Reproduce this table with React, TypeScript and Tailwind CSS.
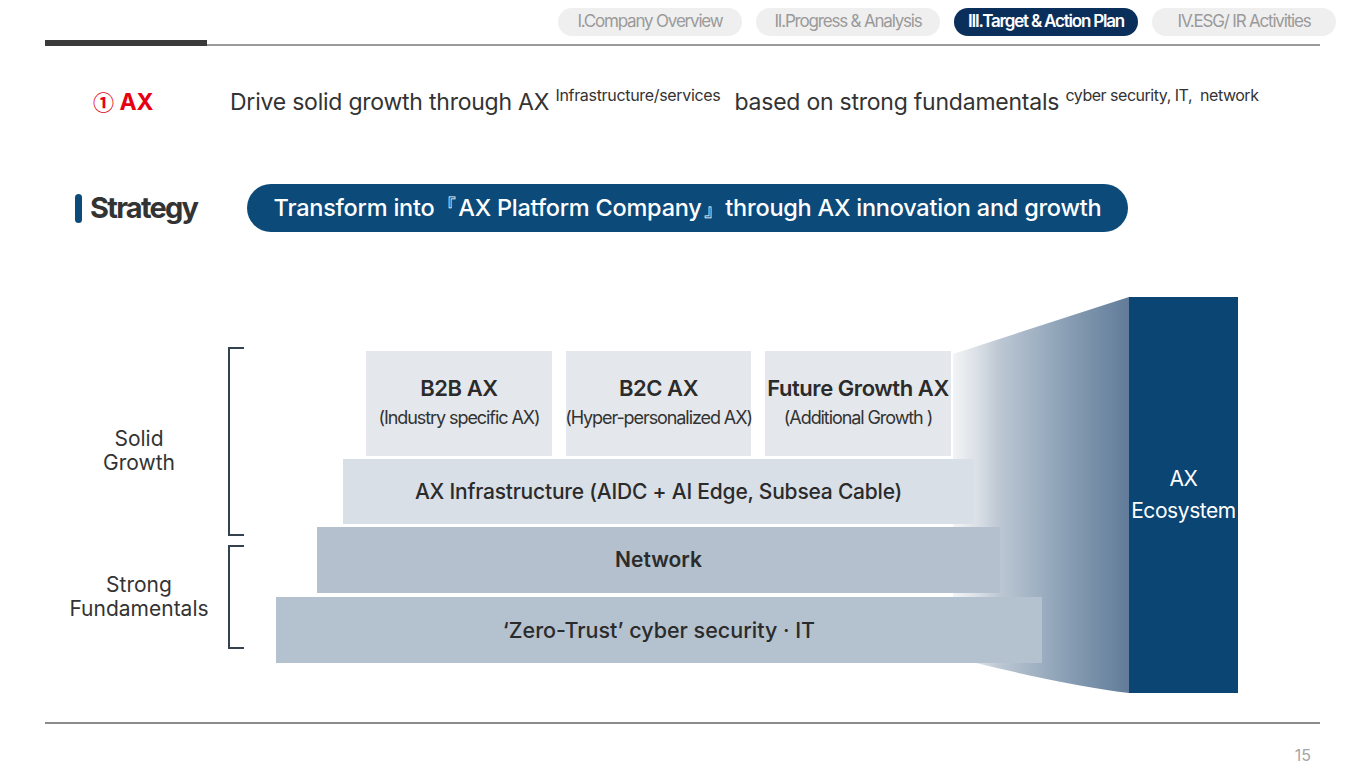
export default function App() {
  const tabs = [
    { label: 'I.Company Overview', active: false },
    { label: 'II.Progress & Analysis', active: false },
    { label: 'III.Target & Action Plan', active: true },
    { label: 'IV.ESG/ IR Activities', active: false },
  ];

  return (
    <div className="w-[1365px] h-[768px] bg-white overflow-hidden font-['Inter',sans-serif] text-[#2b2b2b]">
      {/* top tabs */}
      <div className="flex justify-end gap-[14px] pt-[8px] pr-[29px]">
        {tabs.map(t => (
          <div key={t.label}
            className={`w-[184px] h-[28px] rounded-full flex items-center justify-center text-[17px] tracking-[-0.07em] whitespace-nowrap ${t.active ? 'bg-[#0b2f5b] text-white font-semibold' : 'bg-[#efefef] text-[#9a9a9a]'}`}>
            {t.label}
          </div>
        ))}
      </div>
      <div className="flex items-end mx-[45px] mt-[4px] h-[6px]">
        <div className="w-[162px] h-[6px] bg-[#3a3a3a]" />
        <div className="flex-1 h-[2px] bg-[#9a9a9a]" />
      </div>

      {/* headline */}
      <div className="flex items-baseline mt-[34px] h-[30px] pl-[93px] leading-[30px]">
        <span className="w-[137px] text-[23px] font-bold text-[#e60012] whitespace-nowrap">
          <span className="font-['Noto_Sans_CJK_KR',sans-serif] text-[21px] font-semibold">①</span> AX
        </span>
        <span className="text-[23px] text-[#333] tracking-[-0.01em] whitespace-nowrap">
          Drive solid growth through AX{' '}
          <span className="text-[16px] align-[9px] tracking-[-0.02em]">Infrastructure/services</span>
          <span className="ml-[14px]">based on strong fundamentals</span>{' '}
          <span className="text-[16px] align-[9px] tracking-[-0.03em]">cyber security, IT,&nbsp; network</span>
        </span>
      </div>

      {/* strategy */}
      <div className="flex items-center mt-[74px] pl-[75px] h-[48px]">
        <div className="w-[172px] flex items-center gap-[8px]">
          <div className="w-[7px] h-[29px] rounded-full bg-[#0c4a7a]" />
          <span className="text-[29px] font-bold tracking-[-0.06em] text-[#333]">Strategy</span>
        </div>
        <div className="w-[881px] h-[48px] rounded-full bg-[#0c4a7a] flex items-center justify-center text-white text-[23.5px] font-medium tracking-[-0.01em] whitespace-nowrap">
          Transform into『AX Platform Company』through AX innovation and growth
        </div>
      </div>

      {/* diagram */}
      <div className="flex mt-[65px] h-[396px]">
        <div className="w-[276px] pl-[50px] pt-[50px] flex flex-col">
          <div className="flex h-[189px]">
            <div className="w-[178px] flex items-center justify-center pt-[18px] text-center text-[21px] leading-[24px] text-[#333]">
              Solid<br />Growth
            </div>
            <div className="w-[16px] border-l-2 border-t-2 border-b-2 border-[#34414e]" />
          </div>
          <div className="flex h-[104px] mt-[9px]">
            <div className="w-[178px] flex items-center justify-center text-center text-[21px] leading-[24px] text-[#333]">
              Strong<br />Fundamentals
            </div>
            <div className="w-[16px] border-l-2 border-t-2 border-b-2 border-[#34414e]" />
          </div>
        </div>

        <div className="relative w-[853px] h-[396px]">
          <svg className="absolute inset-0" width="853" height="396" viewBox="0 0 853 396">
            <defs>
              <linearGradient id="fun" gradientUnits="userSpaceOnUse" x1="675" y1="0" x2="853" y2="0">
                <stop offset="0" stopColor="#f4f6f8" />
                <stop offset="0.135" stopColor="#dde2e8" />
                <stop offset="0.275" stopColor="#bcc7d3" />
                <stop offset="0.5" stopColor="#9dafc1" />
                <stop offset="0.725" stopColor="#8097ae" />
                <stop offset="1" stopColor="#617b99" />
              </linearGradient>
            </defs>
            <path d="M677 57 Q760 30 853 0 L853 396 Q790 388 700 366 L677 366 Z" fill="url(#fun)" />
          </svg>
          <div className="relative flex flex-col pt-[54px]">
            <div className="flex gap-[14px] ml-[90px] h-[105px]">
              {[
                { t: 'B2B AX', s: '(Industry specific AX)', w: 'w-[186px]' },
                { t: 'B2C AX', s: '(Hyper-personalized AX)', w: 'w-[185px]' },
                { t: 'Future Growth AX', s: '(Additional Growth )', w: 'w-[186px]' },
              ].map(b => (
                <div key={b.t} className={`${b.w} bg-[#e4e8ec] flex flex-col items-center justify-center`}>
                  <div className="text-[22px] leading-[28px] font-semibold tracking-[-0.02em] whitespace-nowrap">{b.t}</div>
                  <div className="text-[18px] leading-[32px] tracking-[-0.06em] text-[#333] whitespace-nowrap">{b.s}</div>
                </div>
              ))}
            </div>
            <div className="mt-[3px] ml-[67px] w-[631px] h-[65px] bg-[#d9dfe6] flex items-center justify-center text-[21px] font-medium tracking-[-0.01em]">
              AX Infrastructure (AIDC + AI Edge, Subsea Cable)
            </div>
            <div className="mt-[3px] ml-[41px] w-[683px] h-[66px] bg-[#b4c0cd] flex items-center justify-center text-[21px] font-semibold">
              Network
            </div>
            <div className="mt-[4px] w-[766px] h-[66px] bg-[#b4c1ce] flex items-center justify-center text-[21.5px] font-medium">
              ‘Zero-Trust’ cyber security · IT
            </div>
          </div>
        </div>

        <div className="w-[109px] h-[396px] bg-[#0b4573] flex flex-col items-center justify-center text-white text-[21px] leading-[32px] tracking-[-0.02em]">
          <span>AX</span>
          <span>Ecosystem</span>
        </div>
      </div>

      {/* footer */}
      <div className="mt-[29px] mx-[45px] h-[2px] bg-[#8c8c8c]" />
      <div className="mt-[21px] pr-[54px] text-right text-[16px] leading-[20px] text-[#a5a5a5]">15</div>
    </div>
  );
}
